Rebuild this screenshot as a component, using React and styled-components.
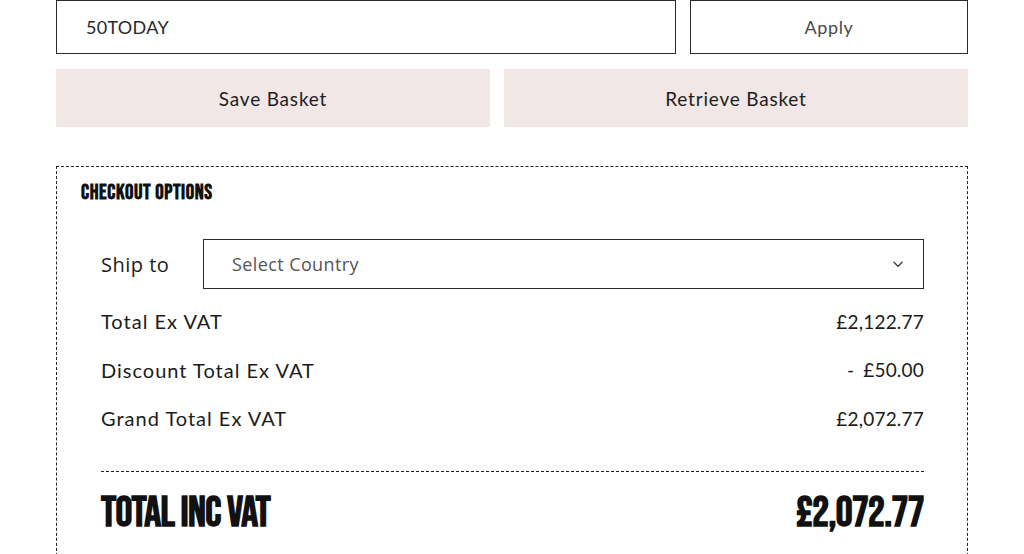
import React from "react";
import styled, { createGlobalStyle } from "styled-components";

const GlobalStyle = createGlobalStyle`
  body {
    margin: 0;
    background: #fff;
    color: #1b1b1b;
    font-family: "Lato", "Noto Sans", sans-serif;
  }
`;

const condensed = `"Bebas Neue", "Liberation Sans Narrow", "DejaVu Sans Condensed", "Roboto Condensed", sans-serif`;

const Page = styled.div`
  width: 912px;
  padding-left: 56px;
`;

const CouponRow = styled.div`
  display: grid;
  grid-template-columns: 620px 278px;
  gap: 14px;
`;

const CouponInput = styled.div`
  height: 54px;
  box-sizing: border-box;
  border: 1px solid #2b2b2b;
  display: flex;
  align-items: center;
  padding-left: 29px;
  font-size: 18px;
  letter-spacing: 0.3px;
  color: #2a2a2a;
`;

const ApplyButton = styled.button`
  height: 54px;
  border: 1px solid #2b2b2b;
  background: #fff;
  font-family: inherit;
  font-size: 18px;
  letter-spacing: 0.6px;
  color: #4a4a4a;
`;

const BasketRow = styled.div`
  display: grid;
  grid-template-columns: 434px 1fr;
  gap: 14px;
  margin-top: 15px;
`;

const BasketButton = styled.button`
  height: 58px;
  border: none;
  background: #f0e7e6;
  font-family: inherit;
  font-size: 19px;
  letter-spacing: 0.8px;
  color: #1e1e1e;
`;

const Checkout = styled.section`
  margin-top: 39px;
  border: 1px dashed #222;
  border-bottom: none;
  padding: 14px 43px 20px 24px;
  height: 400px;
  box-sizing: border-box;
`;

const Heading = styled.h2`
  margin: 0;
  font-family: ${condensed};
  font-stretch: condensed;
  font-weight: 700;
  font-size: 21px;
  letter-spacing: 0.6px;
  line-height: 24px;
  color: #111;
`;

const Body = styled.div`
  padding-left: 20px;
  margin-top: 34px;
`;

const ShipRow = styled.div`
  display: flex;
  align-items: center;
`;

const ShipLabel = styled.span`
  width: 102px;
  font-family: "Open Sans", sans-serif;
  font-size: 20px;
  letter-spacing: 0.5px;
`;

const Select = styled.div`
  flex: 1;
  height: 50px;
  box-sizing: border-box;
  border: 1px solid #2b2b2b;
  display: flex;
  align-items: center;
  justify-content: space-between;
  padding: 0 18px 0 28px;
  font-family: "Open Sans", sans-serif;
  font-size: 18px;
  letter-spacing: 0.4px;
  color: #555;
`;

const Lines = styled.div`
  margin-top: 8px;
`;

const Line = styled.div`
  display: flex;
  justify-content: space-between;
  align-items: center;
  height: 48.5px;
`;

const LineLabel = styled.span`
  font-size: 20px;
  letter-spacing: 1px;
`;

const LineValue = styled.span`
  font-size: 19px;
  letter-spacing: 0.2px;
  word-spacing: 4px;
`;

const Rule = styled.hr`
  margin: 28px 0 0;
  border: none;
  border-top: 1px dashed #222;
`;

const Total = styled.div`
  display: flex;
  justify-content: space-between;
  align-items: center;
  margin-top: 16px;
  font-family: ${condensed};
  font-stretch: condensed;
  font-weight: 700;
  font-size: 42px;
  letter-spacing: -0.6px;
  color: #111;
`;

const Chevron = () => (
  <svg width="14" height="14" viewBox="0 0 24 24" fill="none" stroke="#333" strokeWidth="2.2" strokeLinecap="round" strokeLinejoin="round">
    <path d="M5 9l7 7 7-7" />
  </svg>
);

const lines = [
  ["Total Ex VAT", "£2,122.77"],
  ["Discount Total Ex VAT", "- £50.00"],
  ["Grand Total Ex VAT", "£2,072.77"],
];

export default function App() {
  return (
    <>
      <GlobalStyle />
      <Page>
        <CouponRow>
          <CouponInput>50TODAY</CouponInput>
          <ApplyButton>Apply</ApplyButton>
        </CouponRow>
        <BasketRow>
          <BasketButton>Save Basket</BasketButton>
          <BasketButton>Retrieve Basket</BasketButton>
        </BasketRow>
        <Checkout>
          <Heading>Checkout Options</Heading>
          <Body>
            <ShipRow>
              <ShipLabel>Ship to</ShipLabel>
              <Select>
                Select Country
                <Chevron />
              </Select>
            </ShipRow>
            <Lines>
              {lines.map(([label, value]) => (
                <Line key={label}>
                  <LineLabel>{label}</LineLabel>
                  <LineValue>{value}</LineValue>
                </Line>
              ))}
            </Lines>
            <Rule />
            <Total>
              <span>TOTAL INC VAT</span>
              <span>£2,072.77</span>
            </Total>
          </Body>
        </Checkout>
      </Page>
    </>
  );
}
